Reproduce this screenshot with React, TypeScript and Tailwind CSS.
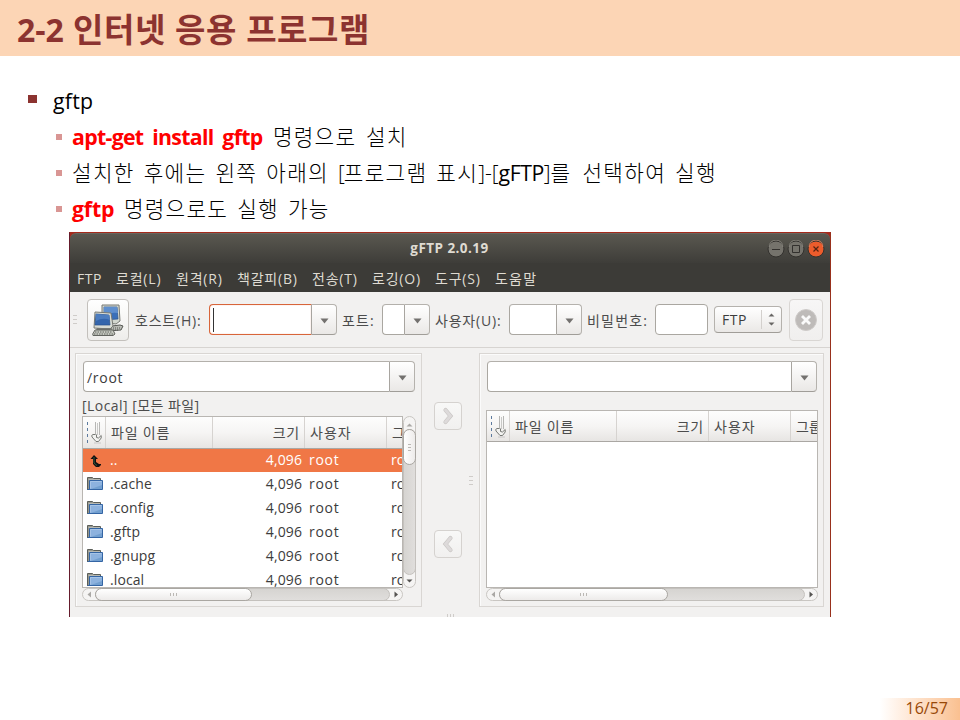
import React from "react";

const UI_FONT = "font-['Open_Sans','Noto_Sans_CJK_KR',sans-serif]";

function Chevron() {
  return (
    <svg width="9" height="6" viewBox="0 0 9 6">
      <path d="M0.5 0.5H8.5L4.5 5.5Z" fill="#73716f" />
    </svg>
  );
}

function Combo({ className, focus, children }: { className: string; focus?: boolean; children?: React.ReactNode }) {
  return (
    <div className={`flex h-[31px] shrink-0 ${className}`}>
      <div
        className={`flex min-w-0 flex-1 items-center rounded-l-[4px] border bg-white ${
          focus ? "border-[#d8653a] shadow-[inset_0_0_1px_#e99a78]" : "border-[#aaa7a1] border-t-[#b3b0ab]"
        } border-r-[#a8a5a0]`}
      >
        {children}
      </div>
      <div className="flex w-[25px] shrink-0 items-center justify-center rounded-r-[4px] border border-l-0 border-[#b5b2ad] border-b-[#a09d98] bg-linear-to-b from-white to-[#eae8e6] pt-[2px]">
        <Chevron />
      </div>
    </div>
  );
}

function ComputersIcon() {
  return (
    <svg width="32" height="32" viewBox="0 0 32 32">
      <g>
        <path d="M12 23L28 21L31 22L29 26L14 27Z" fill="#b9bbb5" stroke="#555753" />
        <path d="M15 24H28M15 26H26" stroke="#555753" strokeDasharray="1 1" />
        <path d="M10 1L27 1L28 17L24 20L10 18Z" fill="#d3d7cf" stroke="#777974" />
        <path d="M12 3L25 3L26 15L12 16Z" fill="#3a6fb9" stroke="#28518c" strokeWidth="0.7" />
        <path d="M12 3L25 3L26 9Q19 8 12 11Z" fill="#5f8fce" />
      </g>
      <g>
        <path d="M3 8L19 9L21 22L18 25L2 24Z" fill="#d8dbd4" stroke="#777974" />
        <path d="M4 10L17 11L18 21L3 21Z" fill="#3465ac" stroke="#28518c" strokeWidth="0.7" />
        <path d="M4 10L17 11L18 16Q11 13 4 17Z" fill="#4c7dc0" />
        <path d="M5 24H18L19 26H4Z" fill="#777974" />
        <path d="M3 26H21L23 30L21 31.5H1L0.7 30Z" fill="#c7cac2" stroke="#62645f" />
        <path d="M3 28H20M2 30H21" stroke="#62645f" strokeDasharray="1.5 1" />
      </g>
    </svg>
  );
}

function FolderIcon() {
  return (
    <svg width="17" height="14" viewBox="0 0 17 14" className="mb-px shrink-0">
      <path d="M0.5 13V0.5H5.5L6.5 1.5H13.5V5" fill="#96978f" stroke="#5c5f59" />
      <path d="M1.5 2.5H13" stroke="#b8bab3" />
      <path d="M2.5 3.5H15.5V12.5H2.5Z" fill="#8db2de" stroke="#3465a4" />
      <path d="M3.5 11.5V4.5H14.5" fill="none" stroke="#a7c4e6" />
      <path d="M4 12L15 8V12Z" fill="#729fcf" />
      <path d="M0.5 12.5H3" stroke="#3465a4" />
    </svg>
  );
}

function UpIcon() {
  return (
    <svg width="12" height="12" viewBox="0 0 12 12">
      <path d="M4 0L8 4H6V7L9 9H11V10L9 12H6L3 9V4H0.5Z" fill="#111" />
      <path d="M4 2V8L7 10.5" fill="none" stroke="#355a40" />
    </svg>
  );
}

function SortIcon() {
  return (
    <svg width="15" height="23" viewBox="0 0 15 23">
      <path d="M0.5 1V23" stroke="#5d7a9e" strokeDasharray="3 3" />
      <path d="M8.5 1V14M12.5 1V14" stroke="#b6b6b4" />
      <path d="M10.5 2V14" stroke="#c9c9c7" />
      <path d="M8.5 13.5H6Q4 14 5 16L9 20.5H11.5L14.2 17V14.5L11.5 17L9.5 16.5V13.5" fill="#f3f3f1" stroke="#777975" />
      <path d="M7 22H14" stroke="#aaa" strokeOpacity="0.5" />
    </svg>
  );
}

function ListHeader({ height }: { height: string }) {
  const cell = "flex shrink-0 items-center border-r border-[#d6d3d0]";
  return (
    <div className={`flex shrink-0 overflow-hidden whitespace-nowrap border-b border-[#aaa7a3] bg-linear-to-b from-[#fdfdfd] via-[#f6f5f4] to-[#e7e5e3] text-[14px] text-[#4c4c4c] ${height}`}>
      <div className={`${cell} w-[23px] pl-1`}><SortIcon /></div>
      <div className={`${cell} w-[107px] pl-[5px]`}><span className="tracking-[0.8px]">파일 이름</span></div>
      <div className={`${cell} w-[92px] justify-end pr-1`}><span className="tracking-[0.8px]">크기</span></div>
      <div className={`${cell} w-[82px] pl-[5px]`}><span className="tracking-[1px]">사용자</span></div>
      <div className="flex shrink-0 items-center pl-[5px]"><span>그룹</span></div>
    </div>
  );
}

function HScroll({ thumb, className }: { thumb: string; className: string }) {
  return (
    <div className={`flex h-[13px] shrink-0 items-stretch rounded-full border border-[#c9c6c2] bg-[#f5f4f3] ${className}`}>
      <div className="flex w-3 items-center justify-center">
        <svg width="4" height="7" viewBox="0 0 4 7"><path d="M4 0.5V6.5L0.5 3.5Z" fill="#aaa8a5" /></svg>
      </div>
      <div className="-my-px flex min-w-0 flex-1 rounded-full border border-[#c4c1bd] bg-linear-to-b from-[#d6d4d1] to-[#e0dedc]">
        <div className={`-my-px -ml-px flex items-center justify-center gap-[2px] rounded-full border border-[#aaa7a2] bg-linear-to-b from-white to-[#edebea] ${thumb}`}>
          <i className="h-[3px] w-px bg-[#bbb8b4]" /><i className="h-[3px] w-px bg-[#bbb8b4]" /><i className="h-[3px] w-px bg-[#bbb8b4]" />
        </div>
      </div>
      <div className="flex w-3 items-center justify-center">
        <svg width="4" height="7" viewBox="0 0 4 7"><path d="M0.5 0.5V6.5L4 3.5Z" fill="#555351" /></svg>
      </div>
    </div>
  );
}

function VScroll() {
  return (
    <div className="flex h-[172px] w-[13px] shrink-0 flex-col rounded-full border border-[#c9c6c2] bg-[#f5f4f3]">
      <div className="flex h-3 items-center justify-center pt-1">
        <svg width="7" height="4" viewBox="0 0 7 4"><path d="M0.5 3.5H6.5L3.5 0.5Z" fill="#aaa8a5" /></svg>
      </div>
      <div className="-mx-px min-h-0 flex-1 rounded-full border border-[#c4c1bd] bg-linear-to-r from-[#d6d4d1] to-[#e0dedc]">
        <div className="-mx-px -mt-px flex h-9 flex-col items-center justify-center gap-[2px] rounded-full border border-[#aaa7a2] bg-linear-to-r from-white to-[#edebea]">
          <i className="h-px w-[3px] bg-[#bbb8b4]" /><i className="h-px w-[3px] bg-[#bbb8b4]" /><i className="h-px w-[3px] bg-[#bbb8b4]" />
        </div>
      </div>
      <div className="flex h-3 items-center justify-center">
        <svg width="7" height="4" viewBox="0 0 7 4"><path d="M0.5 0.5H6.5L3.5 3.5Z" fill="#555351" /></svg>
      </div>
    </div>
  );
}

function FileRow({ name, selected }: { name: string; selected?: boolean }) {
  const pad = selected ? "pb-[2px]" : "pb-0";
  return (
    <div className={`flex shrink-0 items-center overflow-hidden whitespace-nowrap text-[14px] leading-[22px] ${selected ? "h-[23px] bg-[#f07746] text-white" : "h-6 text-[#3c3c3c]"}`}>
      <div className="flex w-[27px] shrink-0 pl-1">{selected ? <span className="pl-[3px]"><UpIcon /></span> : <FolderIcon />}</div>
      <div className={`w-[112px] shrink-0 ${pad}`}><span className="tracking-[0.1px]">{name}</span></div>
      <div className={`w-[80px] shrink-0 text-right ${pad}`}><span className="tracking-[0.1px]">4,096</span></div>
      <div className={`ml-[7px] w-[82px] shrink-0 ${pad}`}><span className="tracking-[0.7px]">root</span></div>
      <div className={`shrink-0 ${pad}`}><span>root</span></div>
    </div>
  );
}

function TransferButton({ left }: { left?: boolean }) {
  return (
    <div className="flex size-7 items-center justify-center rounded-[4px] border border-[#d5d2cf] bg-linear-to-b from-[#f8f8f7] to-[#f1f0ef]">
      <svg width="12" height="18" viewBox="0 0 12 18">
        <path d={left ? "M8.5 3L3.5 9L8.5 15" : "M3.5 3L8.5 9L3.5 15"} fill="none" stroke="#c9c6c4" strokeWidth="4.2" strokeLinecap="round" />
        <path d={left ? "M8.5 3L3.5 9L8.5 15" : "M3.5 3L8.5 9L3.5 15"} fill="none" stroke="#dddada" strokeWidth="2.8" strokeLinecap="round" />
      </svg>
    </div>
  );
}

function Grip() {
  return (
    <div className="flex w-1 flex-col gap-[3px]">
      <i className="h-px bg-[#cfccc9]" /><i className="h-px bg-[#cfccc9]" /><i className="h-px bg-[#cfccc9]" />
    </div>
  );
}

function TitleButton({ kind }: { kind: "min" | "max" | "close" }) {
  return (
    <svg width="18" height="18" viewBox="0 0 18 18">
      <circle cx="9" cy="9" r="8" fill={kind === "close" ? "#ec5c2c" : "#75736c"} stroke="#33312e" />
      <path d="M2 7A7 7 0 0 1 16 7" fill="none" stroke={kind === "close" ? "#f58b65" : "#8e8c84"} strokeWidth="0.8" />
      {kind === "min" && <path d="M5 9.5H13" stroke="#33312e" />}
      {kind === "max" && <path d="M5.5 5.5H12.5V12.5H5.5Z" fill="none" stroke="#33312e" />}
      {kind === "close" && <path d="M6.5 6.5L11.5 11.5M11.5 6.5L6.5 11.5" stroke="#552312" strokeWidth="1.2" />}
    </svg>
  );
}

function GftpWindow() {
  return (
    <div className={`ml-[69px] h-[385px] w-[762px] shrink-0 overflow-hidden border-x border-t border-t-[#a52a1c] border-r-[#98301c] border-l-[#651b2c] bg-[#a52a1c] ${UI_FONT}`}>
      <div className="flex h-[30px] items-center rounded-t-[6px] border-t border-[#69665e] bg-linear-to-b from-[#5a5850] to-[#3e3d39] pr-[5px]">
        <div className="w-[82px]" />
        <div className="flex-1 text-center text-[13.5px] font-bold text-[#dfdbd2]"><span className="tracking-[0.45px]">gFTP 2.0.19</span></div>
        <div className="flex w-[78px] justify-end gap-[2px]">
          <TitleButton kind="min" /><TitleButton kind="max" /><TitleButton kind="close" />
        </div>
      </div>
      <div className="flex h-[29px] items-center whitespace-nowrap bg-[#3c3b37] pt-[2px] pl-[7px] text-[14px] text-[#dfdbd2]">
        <div className="w-[39px]"><span className="tracking-[0.5px]">FTP</span></div>
        <div className="w-[60px]"><span className="tracking-[0.8px]">로컬(L)</span></div>
        <div className="w-[61px]"><span className="tracking-[0.8px]">원격(R)</span></div>
        <div className="w-[75px]"><span className="tracking-[0.8px]">책갈피(B)</span></div>
        <div className="w-[60px]"><span className="tracking-[0.8px]">전송(T)</span></div>
        <div className="w-[63px]"><span className="tracking-[0.8px]">로깅(O)</span></div>
        <div className="w-[60px]"><span className="tracking-[0.8px]">도구(S)</span></div>
        <div><span className="tracking-[1.2px]">도움말</span></div>
      </div>

      <div className="flex h-[56px] items-center whitespace-nowrap border-b border-[#d7d4d1] bg-[#f2f1f0] pl-[3px] text-[14px] text-[#4c4c4c]">
        <Grip />
        <div className="mt-px ml-[10px] flex size-[42px] shrink-0 items-center justify-center rounded-[4px] border border-[#c3c0bc] bg-linear-to-b from-white to-[#eeedeb]">
          <ComputersIcon />
        </div>
        <div className="ml-[6px] w-[74px] shrink-0 pt-[2px]"><span className="tracking-[0.8px]">호스트(H):</span></div>
        <Combo className="w-[128px]" focus><i className="ml-[3px] h-6 w-px bg-[#333]" /></Combo>
        <div className="ml-[5px] w-10 shrink-0 pt-[2px]"><span className="tracking-[1.1px]">포트:</span></div>
        <Combo className="w-[48px]" />
        <div className="ml-[5px] w-[74px] shrink-0 pt-[2px]"><span className="tracking-[0.8px]">사용자(U):</span></div>
        <Combo className="w-[73px]" />
        <div className="ml-[5px] w-[68px] shrink-0 pt-[2px]"><span className="tracking-[1.2px]">비밀번호:</span></div>
        <div className="h-[31px] w-[53px] shrink-0 rounded-[4px] border border-[#aaa7a1] bg-white" />
        <div className="ml-[6px] flex h-[27px] w-[68px] shrink-0 items-center rounded-[4px] border border-[#b5b2ad] border-b-[#a09d98] bg-linear-to-b from-white to-[#eae8e6] pl-[7px] text-[#3c3c3c]">
          <div className="w-[39px]"><span className="tracking-[0.5px]">FTP</span></div>
          <div className="h-[19px] w-px bg-[#d3d0cd]" />
          <svg width="7" height="13" viewBox="0 0 7 13" className="ml-[6px]"><path d="M0.5 3.5H6.5L3.5 0.5ZM0.5 9.5H6.5L3.5 12.5Z" fill="#686664" /></svg>
        </div>
        <div className="mt-px ml-[7px] flex h-[42px] w-[34px] shrink-0 items-center justify-center rounded-[4px] border border-[#d9d6d3] bg-linear-to-b from-[#f7f6f6] to-[#f0efee]">
          <svg width="22" height="22" viewBox="0 0 22 22">
            <circle cx="11" cy="11" r="10.5" fill="#bebbb9" stroke="#cecbc9" />
            <path d="M7 7L15 15M15 7L7 15" stroke="#fafafa" strokeWidth="2.8" />
          </svg>
        </div>
      </div>

      <div className="flex h-[269px] bg-[#f2f1f0] pt-[5px] pl-[5px]">
        <div className="h-[254px] w-[347px] shrink-0 border border-[#d9d6d3] pt-[7px] pl-[6px] shadow-[inset_1px_1px_0_#fbfbfb]">
          <Combo className="ml-px w-[332px]"><span className="pt-[2px] pl-[3px] text-[14px] tracking-[0.7px] text-[#3c3c3c]">/root</span></Combo>
          <div className="flex h-6 items-center whitespace-nowrap pt-[3px] text-[14px] text-[#4c4c4c]"><span className="tracking-[0.45px]">[Local] [모든 파일]</span></div>
          <div className="flex">
            <div className="flex h-[172px] w-[321px] shrink-0 flex-col overflow-hidden border border-[#b9b6b2] bg-white">
              <ListHeader height="h-8" />
              <div className="flex min-h-0 flex-1 flex-col overflow-hidden">
                <FileRow name=".." selected />
                <FileRow name=".cache" />
                <FileRow name=".config" />
                <FileRow name=".gftp" />
                <FileRow name=".gnupg" />
                <FileRow name=".local" />
              </div>
            </div>
            <VScroll />
          </div>
          <HScroll className="w-[321px]" thumb="w-[157px]" />
        </div>

        <div className="flex h-[264px] w-[57px] shrink-0 flex-col pt-[49px] pl-3">
          <TransferButton />
          <div className="mt-[46px] ml-[35px]"><Grip /></div>
          <div className="mt-[45px]"><TransferButton left /></div>
          <div className="mt-[56px] ml-[13px] flex gap-[2px]">
            <i className="h-[3px] w-px bg-[#cfccc9]" /><i className="h-[3px] w-px bg-[#cfccc9]" /><i className="h-[3px] w-px bg-[#cfccc9]" />
          </div>
        </div>

        <div className="h-[254px] w-[345px] shrink-0 border border-[#d9d6d3] pt-[7px] pl-[6px] shadow-[inset_1px_1px_0_#fbfbfb]">
          <Combo className="ml-px w-[330px]" />
          <div className="mt-[18px] h-[178px] w-[332px] overflow-hidden border border-[#b9b6b2] bg-white">
            <ListHeader height="h-[31px]" />
          </div>
          <HScroll className="w-[332px]" thumb="w-[169px]" />
        </div>
      </div>
    </div>
  );
}

function SubItem({ children }: { children: React.ReactNode }) {
  return (
    <li className="flex h-9 items-center whitespace-nowrap pl-14">
      <i className="mr-[10px] size-[6px] shrink-0 bg-[#d99694]" />
      {children}
    </li>
  );
}

export default function App() {
  return (
    <main className="flex h-[720px] w-[960px] flex-col overflow-hidden bg-white font-['Open_Sans','Noto_Sans_CJK_KR',sans-serif] text-black">
      <h1 className="flex h-14 shrink-0 items-center whitespace-nowrap bg-[#fcd5b5] pt-[3px] pl-[17px] text-[32px] font-bold text-[#8c3330]">
        <span className="w-[56px]">2-2</span>
        <span className="text-[33px] tracking-[0.6px]">인터넷 응용 프로그램</span>
      </h1>
      <ul className="h-[176px] shrink-0 pt-[27px] text-[21.3px] font-light">
        <li className="flex h-9 items-center font-normal">
          <i className="-mt-[4px] mr-4 ml-7 h-2 w-[9px] shrink-0 bg-[#8c3330]" />
          <span className="tracking-[0.2px]">gftp</span>
        </li>
        <SubItem>
          <b className="w-[201px] font-bold text-[#ff0000]"><span className="tracking-[-0.7px] [word-spacing:4px]">apt-get install gftp</span></b>
          <span className="tracking-[1.2px] [word-spacing:3px]">명령으로 설치</span>
        </SubItem>
        <SubItem>
          <span className="tracking-[1.3px] [word-spacing:2.2px]">
            설치한 후에는 왼쪽 아래의 <span className="tracking-[-1px]">[</span>프로그램 표시
            <span className="tracking-[0px]">]-[</span>
            <span className="font-normal tracking-[-0.5px]">gFTP</span>
            <span className="tracking-[0px]">]</span>를{" "}
            <span className="pl-[2px]">선택하여 실행</span>
          </span>
        </SubItem>
        <SubItem>
          <b className="w-[52px] font-bold text-[#ff0000]"><span className="tracking-[-0.2px]">gftp</span></b>
          <span className="tracking-[1.2px] [word-spacing:2.5px]">명령으로도 실행 가능</span>
        </SubItem>
      </ul>
      <GftpWindow />
      <footer className="mt-auto flex h-[22px] w-[80px] shrink-0 items-center justify-end self-end bg-linear-to-r from-white to-[#fac090] pr-3 pb-[2px] text-[16px] text-[#984807]">
        <span>16/57</span>
      </footer>
    </main>
  );
}
